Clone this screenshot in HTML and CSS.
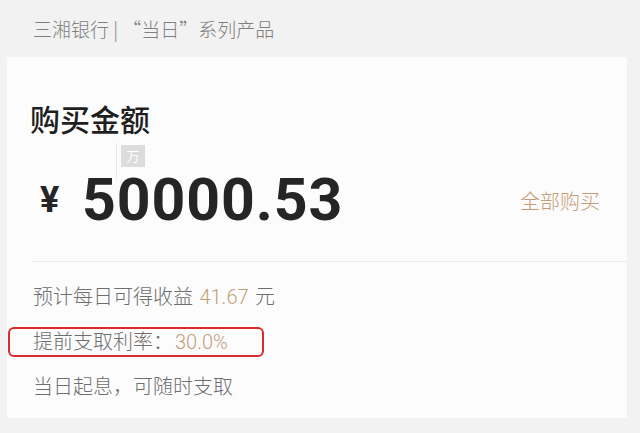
FILE: index.html
```html
<!DOCTYPE html>
<html lang="zh-CN">
<head>
  <meta charset="utf-8">
  <title>当日系列产品</title>
  <link rel="stylesheet" href="styles.css">
</head>
<body>
  <div class="topbar">三湘银行 | “当日”系列产品</div>
  <div class="card">
    <h2 class="title">购买金额</h2>
    <div class="amount">
      <span class="unit">万</span>
      <div class="amount-row">
        <span class="yen">¥</span>
        <span class="num">50000.53</span>
        <span class="buyall">全部购买</span>
      </div>
    </div>
    <div class="divider"></div>
    <div class="info">
      <div class="line">预计每日可得收益 <span class="hl">41.67</span> 元</div>
      <div class="line marked">提前支取利率：<span class="hl">30.0%</span></div>
      <div class="line">当日起息，可随时支取</div>
    </div>
  </div>
</body>
</html>
```

FILE: styles.css
```css
body {
  margin: 0;
  background: #f2f2f2;
  font-family: "Noto Sans CJK SC", "Noto Sans", sans-serif;
}
.topbar {
  height: 57px;
  line-height: 57px;
  padding-left: 33px;
  font-size: 19px;
  font-weight: 300;
  color: #808080;
}
.card {
  margin-left: 7px;
  width: 620px;
  background: #fcfcfc;
  padding: 41px 0 10px 23px;
  box-sizing: border-box;
}
.title {
  margin: 0;
  font-size: 30px;
  line-height: 40px;
  font-weight: 500;
  color: #1f1f1f;
}
.amount {
  position: relative;
}
.amount::before {
  content: "";
  position: absolute;
  left: 86px;
  top: 5px;
  width: 1px;
  height: 36px;
  background: #e8e8e8;
}
.unit {
  display: inline-block;
  margin: 7px 0 0 91px;
  width: 24px;
  height: 22px;
  line-height: 22px;
  text-align: center;
  font-size: 13px;
  color: #fff;
  background: #dcdcdc;
}
.amount-row {
  display: flex;
  align-items: center;
  margin-top: 3px;
  padding: 0 27px 0 10px;
  height: 60px;
}
.yen {
  font-family: "Roboto", sans-serif;
  font-weight: 700;
  font-size: 36px;
  color: #252525;
  width: 42px;
}
.num {
  font-family: "Roboto", sans-serif;
  font-weight: 700;
  font-size: 59px;
  line-height: 60px;
  letter-spacing: 0.9px;
  color: #252525;
  flex: 1;
}
.buyall {
  font-size: 20px;
  font-weight: 300;
  color: #c39c76;
}
.divider {
  margin: 31px 0 0 2px;
  height: 1px;
  background: #ececec;
}
.info {
  padding: 11px 0 0 3px;
}
.line {
  position: relative;
  height: 45px;
  line-height: 45px;
  font-size: 20px;
  font-weight: 300;
  color: #6e6e6e;
}
.hl {
  font-family: "Roboto", sans-serif;
  margin: 0 2px;
  color: #c39c76;
}
.marked::after {
  content: "";
  position: absolute;
  left: -25px;
  top: 9px;
  width: 256px;
  height: 30px;
  box-sizing: border-box;
  border: 2px solid #d92b2b;
  border-radius: 6px;
}
```
